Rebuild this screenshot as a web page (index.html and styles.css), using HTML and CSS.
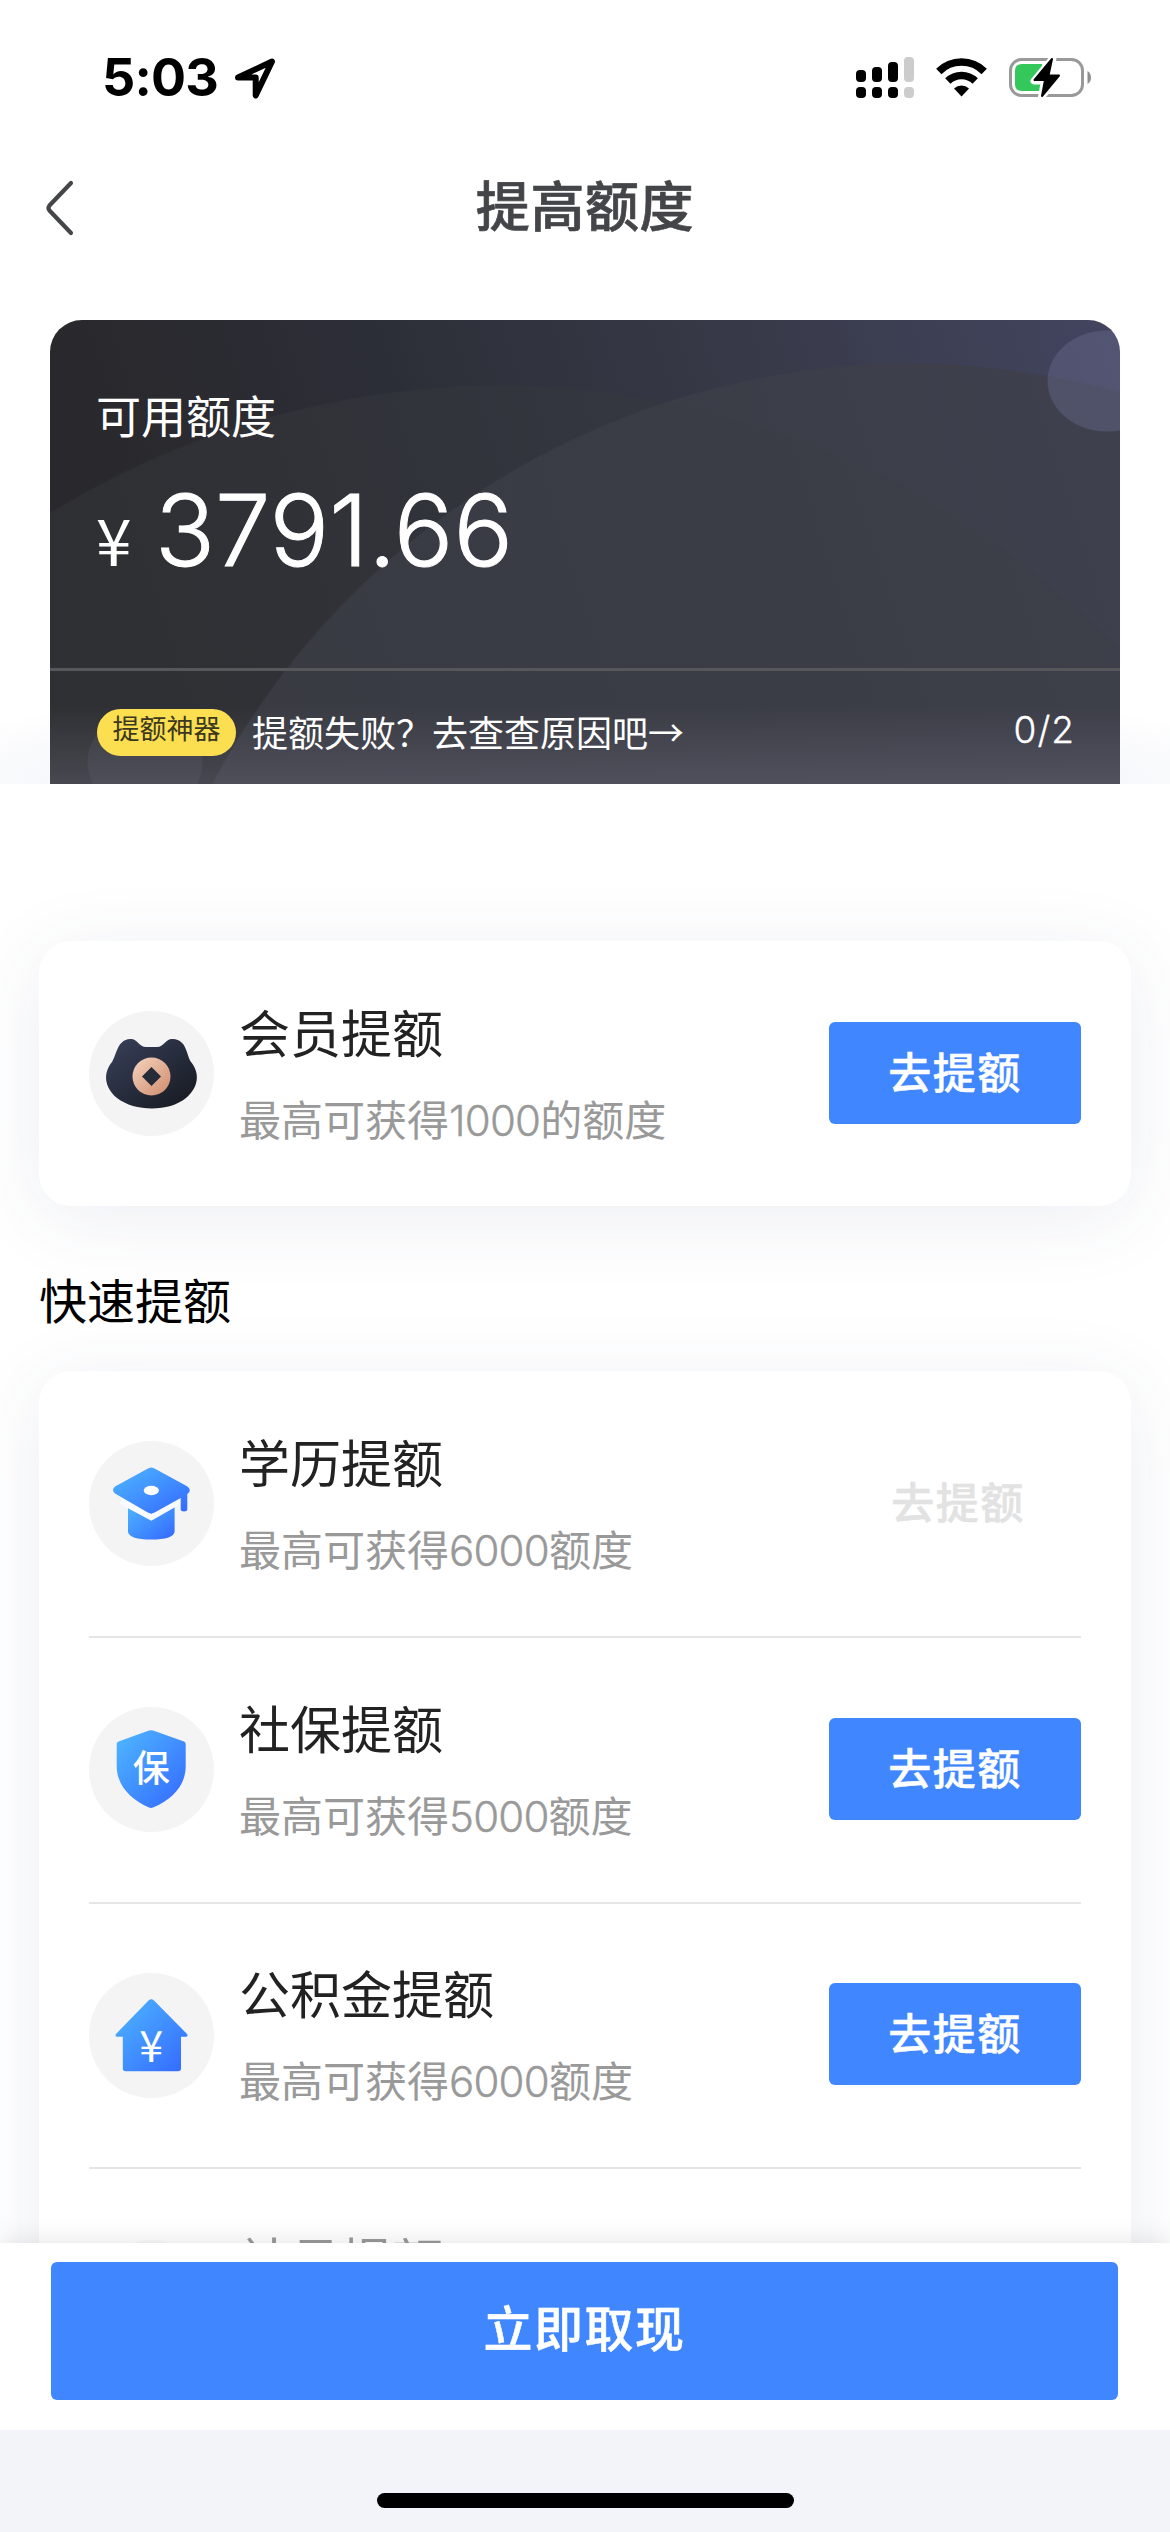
FILE: index.html
```html
<!DOCTYPE html>
<html lang="zh-CN">
<head>
<meta charset="utf-8">
<meta name="viewport" content="width=device-width">
<title>提高额度</title>
<link rel="stylesheet" href="styles.css">
</head>
<body>
<svg class="defs" width="0" height="0" aria-hidden="true">
  <defs>
    <linearGradient id="blue" x1="0" y1="0" x2="1" y2="1"><stop offset="0.1" stop-color="#4cb0ff"/><stop offset="0.9" stop-color="#3670ff"/></linearGradient>
    <linearGradient id="navy" x1="0" y1="0" x2="1" y2="1"><stop offset="0.1" stop-color="#353d55"/><stop offset="0.9" stop-color="#191c24"/></linearGradient>
    <linearGradient id="coin" x1="0" y1="0" x2="1" y2="1"><stop offset="0" stop-color="#f5d3bf"/><stop offset="1" stop-color="#cf8c6c"/></linearGradient>
  </defs>
</svg>
<div class="screen">
  <header class="status">
    <div class="status-left">
      <span class="clock">5:03</span>
      <svg class="location" width="43" height="43" viewBox="0 0 43 43"><path d="M4 20.500 L38 4.500 L21.700 38.500 V20.500 Z" fill="none" stroke="#000" stroke-width="6" stroke-linejoin="round"/></svg>
    </div>
    <div class="status-right">
      <svg width="58" height="42" viewBox="0 0 58 42">
        <g fill="#000"><rect x="0" y="13" width="10" height="12" rx="4"/><rect x="16" y="10" width="10" height="15" rx="4"/><rect x="32" y="5" width="10" height="20" rx="4"/><rect x="0" y="30" width="10" height="11" rx="4"/><rect x="16" y="30" width="10" height="11" rx="4"/><rect x="32" y="30" width="10" height="11" rx="4"/></g>
        <g fill="#ccc"><rect x="48" y="0" width="10" height="25" rx="4"/><rect x="48" y="30" width="10" height="11" rx="4"/></g>
      </svg>
      <svg class="wifi" width="51" height="42" viewBox="0 0 51 42">
        <g fill="none" stroke="#000" stroke-width="7.500"><path d="M2.800 14.500 A32 32 0 0 1 48.200 14.500"/><path d="M11.800 24 A19.500 19.500 0 0 1 39.200 24"/></g>
        <path d="M18 31.500 A11 11 0 0 1 33 31.500 L25.500 39.500 Z"/>
      </svg>
      <svg class="battery" width="83" height="42" viewBox="0 0 83 42">
        <rect x="1.500" y="2.500" width="72" height="36" rx="11" fill="none" stroke="#999" stroke-width="3"/>
        <path d="M78.500 14 Q82 16 82 20.500 Q82 25 78.500 27 Z" fill="#8e8e8e"/>
        <path d="M13 7 H33 L32 34 H13 Q6 34 6 27 V14 Q6 7 13 7 Z" fill="#34c759"/>
        <path d="M44 1 L25 24 H35.500 L32.500 40 L51 18 H40.500 Z" fill="#000" stroke="#fff" stroke-width="7" stroke-linejoin="round"/>
        <path d="M43 2 L25.500 23 H36 L33 39 L50 18.500 H39.500 Z" fill="#000" stroke="#000" stroke-width="2" stroke-linejoin="round"/>
      </svg>
    </div>
  </header>

  <nav class="titlebar">
    <svg class="back" width="32" height="60" viewBox="0 0 32 60"><path d="M27 5 L5.500 27.500 Q3.500 30 5.500 32.500 L27 55" fill="none" stroke="#444548" stroke-width="4.200" stroke-linecap="round"/></svg>
    <h1>提高额度</h1>
  </nav>

  <section class="limit-wrap">
    <div class="limit">
      <div class="limit-main">
        <div class="limit-label">可用额度</div>
        <div class="limit-amount"><span class="yen">¥</span><span class="amount">3791.66</span></div>
      </div>
      <div class="limit-foot">
        <span class="tag">提额神器</span>
        <span class="tip">提额失败？去查查原因吧→</span>
        <span class="count">0/2</span>
      </div>
    </div>
  </section>

  <main class="content">
    <section class="card member">
      <div class="row">
        <div class="icon"><svg width="125" height="125" viewBox="0 0 125 125"><path d="M41 28 C48 27 50 36 57 36 H68 C75 36 77 27 84 28 C98 29 97 43 102 51 C111 62 110 76 97 87 C80 101 46 101 28 87 C15 76 14 62 23 51 C28 43 28 29 41 28 Z" fill="url(#navy)"/><circle cx="62.500" cy="65.500" r="19" fill="url(#coin)"/><path d="M62.500 56 L72 65.500 L62.500 75 L53 65.500 Z" fill="#262b3a"/></svg></div>
        <div class="info"><h3>会员提额</h3><p>最高可获得<span class="num">1000</span>的额度</p></div>
        <button class="go">去提额</button>
      </div>
    </section>

    <h2>快速提额</h2>

    <section class="card list">
      <div class="row">
        <div class="icon"><svg width="125" height="125" viewBox="0 0 125 125"><path d="M39 62 L62.300 72 L85.600 62 V91 Q84 98.500 62.300 98.500 Q40.500 98.500 39 91 Z" fill="url(#blue)"/><path d="M32 60 L62.300 76.300 L91 60" fill="none" stroke="#f8fbff" stroke-width="6"/><path d="M58 28 Q62.300 25 66.500 28 L98.500 45.500 Q102.500 49 99.500 52 L98.300 53 V68 Q98.300 70.500 95 70.500 Q91.700 70.500 91.700 68 V57 L66.500 71 Q62.300 73.500 58 71 L26 52.500 Q22 49 26 45.500 Z" fill="url(#blue)"/><ellipse cx="62.300" cy="49.500" rx="7.600" ry="4.700" fill="#fff"/></svg></div>
        <div class="info"><h3>学历提额</h3><p>最高可获得<span class="num">6000</span>额度</p></div>
        <button class="go disabled">去提额</button>
      </div>
      <div class="row">
        <div class="icon"><svg width="125" height="125" viewBox="0 0 125 125"><path d="M60 23.600 Q62 22.800 64 23.600 L95 34.500 Q96.700 35.300 96.700 37 V59 C96.700 78 84 92 64 100.600 Q62 101.500 60 100.600 C41 92 27.700 78 27.700 59 V37 Q27.700 35.300 29.500 34.500 Z" fill="url(#blue)"/><text x="62.300" y="75" text-anchor="middle" class="glyph">保</text></svg></div>
        <div class="info"><h3>社保提额</h3><p>最高可获得<span class="num">5000</span>额度</p></div>
        <button class="go">去提额</button>
      </div>
      <div class="row">
        <div class="icon"><svg width="125" height="125" viewBox="0 0 125 125"><path d="M59.500 27.500 Q62.300 25 65 27.500 L98 61 Q99.500 63.500 97 63.800 H92 V95.500 Q92 98.300 89 98.300 H36.800 Q33.800 98.300 33.800 95.500 V63.800 H28 Q25.500 63.500 27 61 Z" fill="url(#blue)"/><text x="62.300" y="89" text-anchor="middle" class="glyph yen-glyph">¥</text></svg></div>
        <div class="info"><h3>公积金提额</h3><p>最高可获得<span class="num">6000</span>额度</p></div>
        <button class="go">去提额</button>
      </div>
      <div class="row faded">
        <div class="icon"></div>
        <div class="info"><h3>社员提额</h3></div>
      </div>
    </section>
  </main>

  <footer class="bottom">
    <div class="action"><button class="withdraw">立即取现</button></div>
    <div class="home"><span class="home-bar"></span></div>
  </footer>
</div>
</body>
</html>
```

FILE: styles.css
```css
* { box-sizing: border-box; margin: 0; padding: 0; }

body {
  background: #fff;
  font-family: Inter, "Noto Sans CJK SC", sans-serif;
  color: #222;
}

button { border: 0; font-family: inherit; }

.defs { display: block; }

.screen {
  width: 1170px;
  height: 2532px;
  display: flex;
  flex-direction: column;
  overflow: hidden;
  background: #fff;
}

/* status bar */
.status {
  flex: none;
  height: 141px;
  padding: 57px 78px 0 102px;
  display: flex;
  justify-content: space-between;
  align-items: flex-start;
}
.status-left { display: flex; align-items: flex-start; }
.clock {
  width: 132px;
  font-size: 52px;
  font-weight: 700;
  line-height: 42px;
  letter-spacing: -0.8px;
  color: #000;
}
.status-right { display: flex; }
.wifi { margin-left: 22px; }
.battery { margin-left: 22px; }

/* title bar */
.titlebar {
  flex: none;
  height: 179px;
  padding: 0 44px;
  display: grid;
  grid-template-columns: 32px 1fr 32px;
  align-items: start;
}
.back { margin-top: 37px; }
.titlebar h1 {
  font-size: 54px;
  font-weight: 500;
  line-height: 80px;
  margin-top: 27px;
  text-align: center;
  color: #444548;
  letter-spacing: 0.6px;
  -webkit-text-stroke: 0.7px #444548;
}

/* credit limit card */
.limit-wrap {
  flex: none;
  height: 464px;
  padding: 0 50px;
  background: radial-gradient(ellipse 720px 110px at 50% 100%, #f3f4f9 60%, #fff 100%);
}
.limit {
  height: 464px;
  border-radius: 32px 32px 0 0;
  overflow: hidden;
  display: flex;
  flex-direction: column;
  color: #fff;
  background:
    linear-gradient(180deg, rgba(120, 118, 135, 0) 83%, rgba(120, 118, 135, 0.34) 100%),
    radial-gradient(ellipse 60px 51px at 1057px 61px, rgba(104, 106, 142, 0.42) 98%, transparent 100%),
    radial-gradient(ellipse 58px 52px at 95px 442px, rgba(110, 112, 130, 0.16) 98%, transparent 100%),
    radial-gradient(circle 790px at 860px 833px, rgba(61, 63, 72, 0.72) 99.8%, transparent 100%),
    radial-gradient(circle 860px at 450px 925px, rgba(54, 57, 61, 0.46) 99.8%, transparent 100%),
    linear-gradient(72deg, #29282c 12%, #2c2e37 38%, #363846 65%, #434560 100%);
}
.limit-main { flex: none; height: 348px; padding: 66px 46px 0; }
.limit-label { font-size: 45px; line-height: 64px; font-weight: 400; }
.limit-amount { display: flex; align-items: baseline; margin-top: 19px; line-height: 122px; }
.yen { width: 59px; font-size: 64px; font-family: "Noto Sans CJK SC", sans-serif; font-weight: 400; }
.amount { font-size: 99px; font-weight: 300; letter-spacing: 0.1px; -webkit-text-stroke: 1px #fff; }
.limit-foot {
  flex: 1;
  border-top: 3px solid #56575b;
  padding: 10px 46px 0 47px;
  display: flex;
  align-items: center;
}
.tag {
  width: 139px;
  height: 47px;
  border-radius: 24px;
  background: #fbdf50;
  color: #3b3820;
  font-size: 27px;
  line-height: 42px;
  text-align: center;
}
.tip { margin: 0 0 3px 16px; font-family: "Noto Sans CJK SC", sans-serif; font-size: 36px; line-height: 50px; }
.count { margin: 0 -1px 5px auto; font-size: 37px; font-weight: 300; letter-spacing: 1px; line-height: 50px; -webkit-text-stroke: 0.3px #fff; }

/* offers */
.content { flex: none; height: 1459px; padding: 157px 39px 0; overflow: hidden; }
.card { border-radius: 32px; background: #fff; box-shadow: 0 12px 80px rgba(60, 70, 120, 0.09); }
.member { height: 265px; }
.content h2 {
  font-size: 48px;
  font-weight: 400;
  line-height: 70px;
  color: #000;
  padding: 61px 0 34px;
}
.row {
  height: 265.300px;
  margin: 0 50px;
  display: flex;
  align-items: center;
}
.row + .row { border-top: 2px solid #e6e6e6; }
.icon { flex: none; width: 125px; height: 125px; border-radius: 50%; background: #f4f4f4; }
.icon svg { display: block; }
.glyph { font-family: "Noto Sans CJK SC", sans-serif; font-size: 37px; font-weight: 500; fill: #fff; }
.yen-glyph { font-size: 43px; font-weight: 400; }
.info { margin-left: 25px; padding-top: 2px; }
.info h3 { font-size: 51px; font-weight: 400; line-height: 72px; color: #222; }
.info p { font-size: 42px; line-height: 60px; margin-top: 20px; font-weight: 400; color: #999; }
.num { font-weight: 300; letter-spacing: -0.8px; -webkit-text-stroke: 0.4px #999; }
.go {
  margin: 0 0 2px auto;
  width: 252px;
  height: 102px;
  border-radius: 6px;
  background: #4086ff;
  color: #fff;
  font-size: 43px;
  font-weight: 500;
  letter-spacing: 1.500px;
  line-height: 98px;
  -webkit-text-stroke: 0.5px currentColor;
}
.go.disabled { background: none; color: #e2e2e2; padding-left: 6px; }
.faded { align-items: flex-start; padding-top: 71px; }
.faded .icon { opacity: 0.5; }
.faded .info { opacity: 0.45; padding-top: 0; margin-top: -13px; }

/* bottom bar */
.bottom {
  flex: none;
  position: relative;
  height: 289px;
  display: flex;
  flex-direction: column;
  background: #fff;
  box-shadow: 0 -2px 24px rgba(0, 0, 0, 0.1);
}
.action { height: 187px; padding: 19px 52px 0 51px; }
.withdraw {
  width: 100%;
  height: 138px;
  border-radius: 6px;
  background: #4086ff;
  color: #fff;
  font-size: 49px;
  font-weight: 500;
  letter-spacing: 1.500px;
  line-height: 129px;
  padding-bottom: 4px;
  -webkit-text-stroke: 0.5px #fff;
}
.home { flex: 1; display: flex; justify-content: center; padding-top: 63px; background: #f3f4f9; }
.home-bar { width: 417px; height: 15px; border-radius: 8px; background: #000; }
```
